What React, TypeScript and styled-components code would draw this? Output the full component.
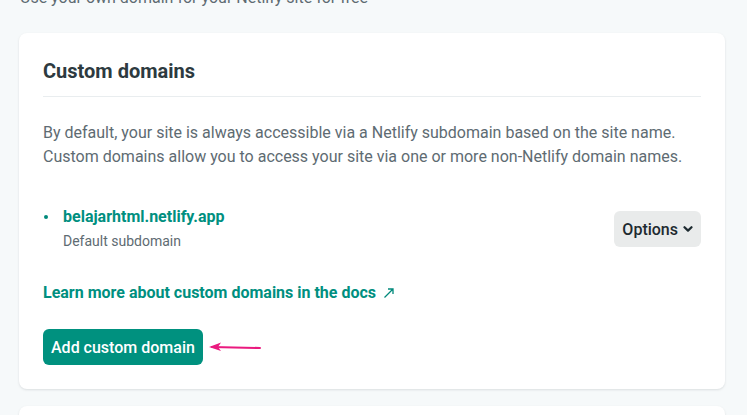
import React from "react";
import styled, { createGlobalStyle } from "styled-components";

const Global = createGlobalStyle`
  html, body { margin: 0; padding: 0; background: #f6f9fa; }
  body { font-family: Roboto, "Liberation Sans", Arial, sans-serif; -webkit-font-smoothing: antialiased; }
  * { box-sizing: border-box; }
`;

const Page = styled.div`
  display: flex;
  flex-direction: column;
  padding: 0 22px 0 19px;
  margin-top: -14px;
`;

const Intro = styled.p`
  margin: 0 0 23px 1px;
  font-size: 16px;
  line-height: 24px;
  color: #5e6b72;
`;

const Card = styled.section<{ $min?: number }>`
  background: #fff;
  border-radius: 8px;
  box-shadow: 0 1px 3px rgba(14, 30, 37, 0.08), 0 1px 2px rgba(14, 30, 37, 0.04);
  padding: 24px;
  margin-bottom: 17px;
  min-height: ${(p) => (p.$min ? `${p.$min}px` : "auto")};
`;

const Title = styled.h2`
  margin: 0;
  padding-bottom: 11px;
  border-bottom: 1px solid #e9edef;
  font-size: 20px;
  line-height: 28px;
  font-weight: 700;
  color: #2d3a40;
`;

const Text = styled.p`
  margin: 24px 0 36px;
  font-size: 16px;
  line-height: 24px;
  color: #5e6b72;
`;

const DomainRow = styled.div`
  display: flex;
  align-items: center;
  justify-content: space-between;
`;

const DomainInfo = styled.div`
  display: flex;
  align-items: flex-start;
  gap: 15px;
`;

const Bullet = styled.span`
  width: 4px;
  height: 4px;
  border-radius: 50%;
  background: #00897b;
  margin: 10px 0 0 1px;
  flex: none;
`;

const DomainText = styled.div`
  display: flex;
  flex-direction: column;
  gap: 2px;
`;

const DomainLink = styled.a`
  font-size: 16px;
  line-height: 24px;
  font-weight: 700;
  color: #008f80;
  text-decoration: none;
`;

const SubText = styled.span`
  font-size: 14px;
  line-height: 20px;
  color: #5e6b72;
`;

const OptionsButton = styled.button`
  display: flex;
  align-items: center;
  gap: 5px;
  height: 36px;
  padding: 0 8px;
  border: none;
  border-radius: 6px;
  background: #e9ebeb;
  font-family: inherit;
  font-size: 16px;
  font-weight: 500;
  color: #1d2a30;
  margin-top: 2px;
`;

const DocsLink = styled.a`
  display: inline-flex;
  align-items: center;
  gap: 7px;
  margin-top: 30px;
  font-size: 16px;
  line-height: 24px;
  font-weight: 700;
  color: #008f80;
  text-decoration: none;
`;

const ActionRow = styled.div`
  display: flex;
  align-items: center;
  gap: 5px;
  margin-top: 24px;
`;

const PrimaryButton = styled.button`
  height: 36px;
  padding: 0 8px;
  border: none;
  border-radius: 6px;
  background: #00917f;
  color: #fff;
  font-family: inherit;
  font-size: 16px;
  font-weight: 500;
`;

const Chevron = () => (
  <svg width="10" height="8" viewBox="0 0 10 8">
    <path d="M1.5 2.2 L5 5.6 L8.5 2.2" stroke="#1d2a30" strokeWidth="2.2" fill="none" strokeLinecap="round" strokeLinejoin="round" />
  </svg>
);

const External = () => (
  <svg width="12" height="12" viewBox="0 0 12 12">
    <path d="M1.5 10.5 L10 2 M5 2 H10 V7" stroke="#00897b" strokeWidth="1.3" fill="none" />
  </svg>
);

const PinkArrow = () => (
  <svg width="53" height="12" viewBox="0 0 53 12">
    <path d="M4 6 L52 7" stroke="#ea1a7f" strokeWidth="2" strokeLinecap="round" />
    <path d="M1 6 L13 1.5 L10 6 L13 10 Z" fill="#ea1a7f" />
  </svg>
);

export default function App() {
  return (
    <>
      <Global />
      <Page>
        <Intro>Use your own domain for your Netlify site for free</Intro>
        <Card>
          <Title>Custom domains</Title>
          <Text>
            By default, your site is always accessible via a Netlify subdomain based on the site name.
            <br />
            Custom domains allow you to access your site via one or more non-Netlify domain names.
          </Text>
          <DomainRow>
            <DomainInfo>
              <Bullet />
              <DomainText>
                <DomainLink href="#">belajarhtml.netlify.app</DomainLink>
                <SubText>Default subdomain</SubText>
              </DomainText>
            </DomainInfo>
            <OptionsButton>
              Options <Chevron />
            </OptionsButton>
          </DomainRow>
          <DocsLink href="#">
            Learn more about custom domains in the docs <External />
          </DocsLink>
          <ActionRow>
            <PrimaryButton>Add custom domain</PrimaryButton>
            <PinkArrow />
          </ActionRow>
        </Card>
        <Card $min={100} />
      </Page>
    </>
  );
}
